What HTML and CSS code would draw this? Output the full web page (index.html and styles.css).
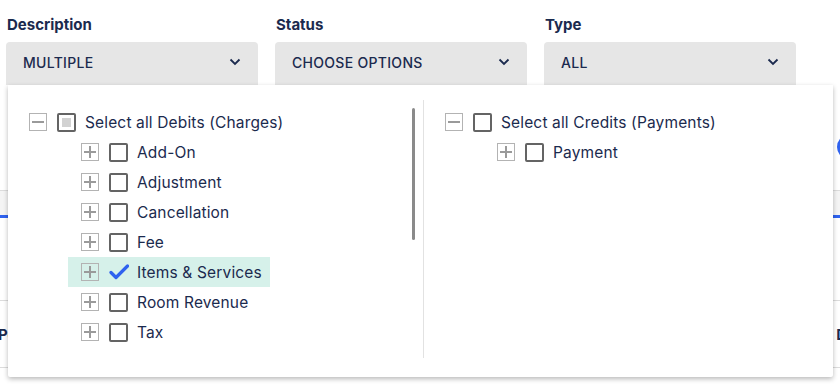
FILE: index.html
```html
<!DOCTYPE html>
<html lang="en">
<head>
    <meta charset="UTF-8">
    <title>Transactions filter</title>
    <link rel="stylesheet" href="styles.css">
</head>
<body>
    <!-- Filter bar -->
    <div class="filters">
        <div class="filter">
            <label class="filter-label">Description</label>
            <div class="select">
                <span>MULTIPLE</span>
                <svg class="chevron" width="12" height="8" viewBox="0 0 12 8"><polyline points="1.5,1.5 6,6 10.5,1.5" /></svg>
            </div>
        </div>
        <div class="filter">
            <label class="filter-label">Status</label>
            <div class="select">
                <span>CHOOSE OPTIONS</span>
                <svg class="chevron" width="12" height="8" viewBox="0 0 12 8"><polyline points="1.5,1.5 6,6 10.5,1.5" /></svg>
            </div>
        </div>
        <div class="filter">
            <label class="filter-label">Type</label>
            <div class="select">
                <span>ALL</span>
                <svg class="chevron" width="12" height="8" viewBox="0 0 12 8"><polyline points="1.5,1.5 6,6 10.5,1.5" /></svg>
            </div>
        </div>
    </div>

    <!-- Page content behind the open dropdown -->
    <div class="page">
        <div class="toolbar">
            <div class="round-btn"></div>
        </div>
        <div class="tabs"></div>
        <div class="table-head">
            <span>Posted</span>
            <span>Date</span>
        </div>
    </div>

    <!-- Open dropdown of the Description filter -->
    <div class="dropdown">
        <div class="tree-col left">
            <div class="scroll-thumb"></div>
            <div class="node root">
                <span class="expander minus"></span>
                <span class="checkbox partial"></span>
                <span class="node-text">Select all Debits (Charges)</span>
            </div>
            <div class="children">
                <div class="node">
                    <span class="expander plus"></span>
                    <span class="checkbox"></span>
                    <span class="node-text">Add-On</span>
                </div>
                <div class="node">
                    <span class="expander plus"></span>
                    <span class="checkbox"></span>
                    <span class="node-text">Adjustment</span>
                </div>
                <div class="node">
                    <span class="expander plus"></span>
                    <span class="checkbox"></span>
                    <span class="node-text">Cancellation</span>
                </div>
                <div class="node">
                    <span class="expander plus"></span>
                    <span class="checkbox"></span>
                    <span class="node-text">Fee</span>
                </div>
                <div class="node selected">
                    <span class="expander plus"></span>
                    <svg class="check" width="20" height="18" viewBox="0 0 20 18"><polyline points="2,9.5 7,14.5 18.5,3" /></svg>
                    <span class="node-text">Items &amp; Services</span>
                </div>
                <div class="node">
                    <span class="expander plus"></span>
                    <span class="checkbox"></span>
                    <span class="node-text">Room Revenue</span>
                </div>
                <div class="node">
                    <span class="expander plus"></span>
                    <span class="checkbox"></span>
                    <span class="node-text">Tax</span>
                </div>
            </div>
        </div>
        <div class="tree-col right">
            <div class="node root">
                <span class="expander minus"></span>
                <span class="checkbox"></span>
                <span class="node-text">Select all Credits (Payments)</span>
            </div>
            <div class="children">
                <div class="node">
                    <span class="expander plus"></span>
                    <span class="checkbox"></span>
                    <span class="node-text">Payment</span>
                </div>
            </div>
        </div>
    </div>
</body>
</html>
```

FILE: styles.css
```css
body {
    margin: 0;
    font-family: Inter, 'Noto Sans', sans-serif;
    color: #1b2a4e;
    background: #fff;
    overflow: hidden;
    position: relative;
    width: 840px;
    height: 384px;
}

.filters {
    display: flex;
    gap: 17px;
    padding: 15px 0 0 6px;
}

.filter {
    width: 252px;
}

.filter-label {
    display: block;
    font-size: 15px;
    font-weight: 700;
    line-height: 20px;
    padding-left: 1px;
    margin-bottom: 7px;
}

.select {
    display: flex;
    align-items: center;
    justify-content: space-between;
    height: 43px;
    padding: 0 17px;
    background: #e6e6e6;
    border-radius: 4px 4px 0 0;
    font-size: 14px;
    font-weight: 500;
    letter-spacing: 0.3px;
    padding-bottom: 3px;
    box-sizing: border-box;
}

.chevron {
    fill: none;
    stroke: #1b2a4e;
    stroke-width: 1.8;
}

/* background page */
.toolbar {
    display: flex;
    justify-content: flex-end;
    height: 105px;
    align-items: center;
}

.round-btn {
    width: 26px;
    height: 26px;
    border-radius: 50%;
    background: #2f62ef;
    margin-right: -23px;
    margin-top: 18px;
}

.tabs {
    height: 24px;
    border-top: 1px solid #dcdcdc;
    background: #f4f4f4;
    border-bottom: 3px solid #2f62ef;
}

.table-head {
    display: flex;
    justify-content: space-between;
    align-items: center;
    margin-top: 82px;
    height: 66px;
    border-top: 1px solid #dcdcdc;
    border-bottom: 1px solid #dcdcdc;
    font-size: 15px;
    font-weight: 700;
}

.table-head span:first-child {
    margin-left: -2px;
}

.table-head span:last-child {
    margin-right: -30px;
}

/* dropdown */
.dropdown {
    position: absolute;
    top: 85px;
    left: 8px;
    width: 825px;
    height: 292px;
    box-sizing: border-box;
    padding: 15px 0 19px;
    display: flex;
    background: #fff;
    box-shadow: 0 2px 5px rgba(0, 0, 0, 0.28);
    border-radius: 0 0 2px 2px;
}

.tree-col {
    position: relative;
    padding: 7px 0 0 21px;
    box-sizing: border-box;
}

.tree-col.left {
    width: 416px;
    border-right: 1px solid #e2e2e2;
}

.tree-col.right {
    flex: 1;
}

.scroll-thumb {
    position: absolute;
    top: 8px;
    right: 8px;
    width: 3px;
    height: 132px;
    background: #8a8a8a;
    border-radius: 2px;
}

.node {
    display: flex;
    align-items: center;
    height: 30px;
    font-size: 15.5px;
    letter-spacing: 0.15px;
    white-space: nowrap;
}

.children {
    padding-left: 39px;
}

.children .node {
    width: max-content;
    padding: 0 8px 0 13px;
}

.node.selected {
    background: #d6f1ea;
}

.expander {
    position: relative;
    width: 18px;
    height: 18px;
    box-sizing: border-box;
    border: 1px solid #b3b3b3;
    background: #fff;
    margin-right: 10px;
    flex-shrink: 0;
}

.node.selected .expander {
    background: transparent;
}

.expander::before,
.expander::after {
    content: "";
    position: absolute;
    background: #9a9a9a;
}

.expander::before {
    left: 2px;
    right: 2px;
    top: 7px;
    height: 2px;
}

.expander.plus::after {
    top: 2px;
    bottom: 2px;
    left: 7px;
    width: 2px;
}

.checkbox {
    position: relative;
    width: 19px;
    height: 19px;
    box-sizing: border-box;
    border: 2px solid #646464;
    border-radius: 2px;
    background: #fff;
    margin-right: 9px;
    flex-shrink: 0;
}

.checkbox.partial::after {
    content: "";
    position: absolute;
    left: 3px;
    top: 3px;
    width: 9px;
    height: 9px;
    background: #d2d2d2;
}

.check {
    fill: none;
    stroke: #2f62ef;
    stroke-width: 3.2;
    stroke-linecap: round;
    stroke-linejoin: round;
    margin-right: 8px;
    flex-shrink: 0;
}

.node-text {
    line-height: 20px;
    padding-top: 1px;
}
```
